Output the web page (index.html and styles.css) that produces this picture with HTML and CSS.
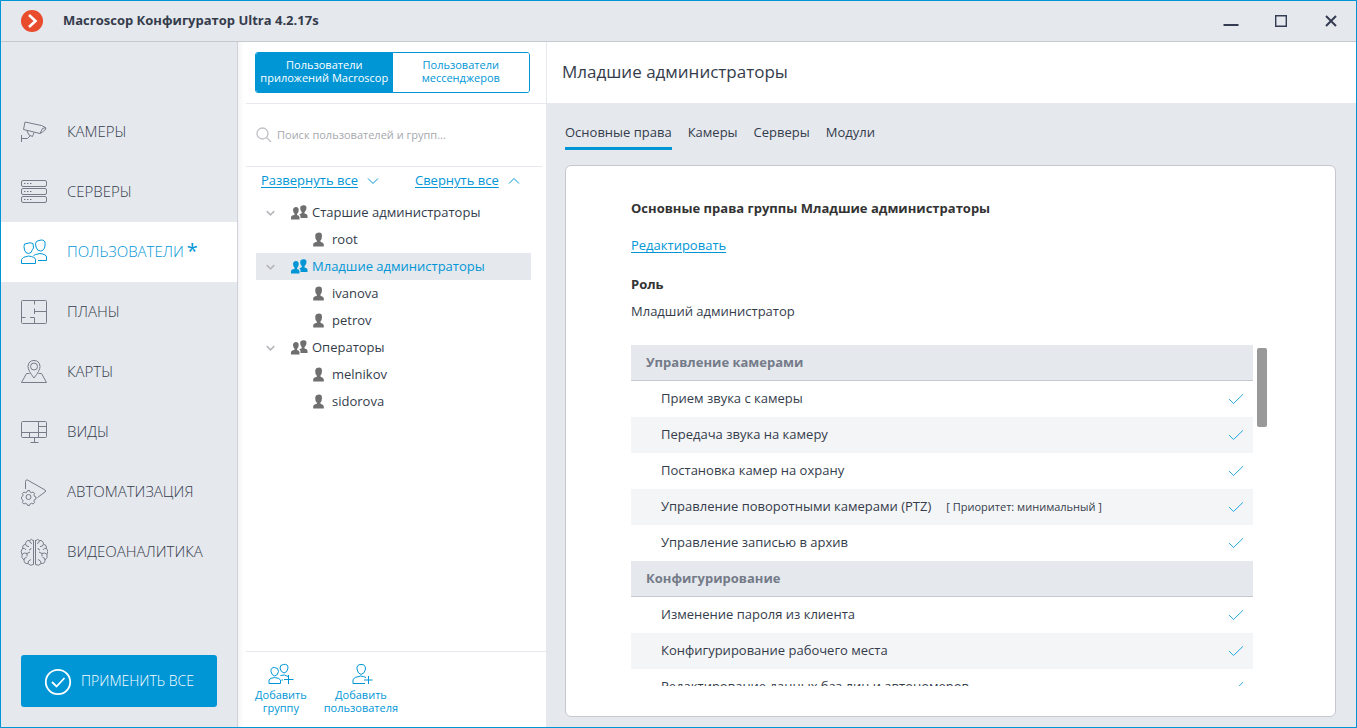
FILE: index.html
```html
<!DOCTYPE html>
<html lang="ru">
<head>
<meta charset="utf-8">
<title>Macroscop Конфигуратор</title>
<link rel="stylesheet" href="styles.css">
</head>
<body>
<svg class="sprite" aria-hidden="true">
  <symbol id="people" viewBox="0 0 17 15">
    <path d="M8.500 14.500V12.300Q8.500 10.500 6 10L6.300 8.800Q7.800 7.500 7.700 4.800 7.500 2 5 2T2 4.800Q2 7.500 3.500 8.800V10Q0 10.300 0 12.500V14.500Z"/>
    <path d="M9.500 13H16.500V10.800Q16.500 9 13.500 8.500V7.200Q15.500 5.500 15.500 3 15.500 0 12.500.3 9.200.3 9.200 3 9 5.500 10.800 7.200V8.300L8.300 9.300Q10 10.500 9.500 13Z"/>
  </symbol>
  <symbol id="person" viewBox="0 0 11 15">
    <path d="M5 .7Q9 0 9 4 9 7.500 7.200 9L8 10Q10.800 10.500 10.800 12.500V14.500H.2V12.500Q.2 10.500 3.500 10L4 9Q2 7 2.200 4 2.300 1 5 .7Z"/>
  </symbol>
  <symbol id="down" viewBox="0 0 12 8"><path d="M1 1.500 6 6.500 11 1.500"/></symbol>
  <symbol id="check" viewBox="0 0 16 12"><path d="M1 6 5.500 10.500 15 1.300"/></symbol>
</svg>
<div class="window">
  <header class="titlebar">
    <svg class="logo" viewBox="0 0 22 22"><circle cx="11" cy="11" r="11" fill="#e94b2d"/><path d="M8 5 14.500 11 8 17" fill="none" stroke="#fff" stroke-width="2.600"/></svg>
    <h1 class="app-name">Macroscop Конфигуратор Ultra 4.2.17s</h1>
    <button class="win-btn" aria-label="Свернуть"><svg viewBox="0 0 16 16"><path d="M.5 12h15" stroke-width="2"/></svg></button>
    <button class="win-btn" aria-label="Развернуть"><svg viewBox="0 0 16 16"><path d="M2.700 2.700h10.600v10.600H2.700Z" stroke-width="1.400"/></svg></button>
    <button class="win-btn" aria-label="Закрыть"><svg viewBox="0 0 16 16"><path d="M3 3 13 13M13 3 3 13" stroke-width="2"/></svg></button>
  </header>
  <div class="body">
    <aside class="sidebar">
      <nav class="nav">
        <a href="#" class="nav-item"><svg viewBox="0 0 28 28"><path d="M5 4 21.500 7.500Q26 9 26 11L22.500 14 20 15.500 3.500 11.500ZM20 15.500 22.500 10.500 26 9.500M7 13 9 17 12.500 18.500 14 14.500M10 18 7.500 20.500H1.500M1.500 17V24"/></svg>КАМЕРЫ</a>
        <a href="#" class="nav-item"><svg viewBox="0 0 28 28"><rect x="1.500" y="2.500" width="25" height="6" rx="1.500"/><rect x="1.500" y="10.500" width="25" height="6" rx="1.500"/><rect x="1.500" y="18.500" width="25" height="6" rx="1.500"/><path d="M4 5.500h1.500m1.500 0h1.500m1.500 0h1.500M4 13.500h1.500m1.500 0h1.500m1.500 0h1.500M4 21.500h1.500m1.500 0h1.500m1.500 0h1.500"/></svg>СЕРВЕРЫ</a>
        <a href="#" class="nav-item active"><svg viewBox="0 0 28 28"><path d="M4 8.500Q3.500 5 7 5.500 10 4 13 5.500L13.500 10 12.500 11.500Q11.500 15.500 8.500 15.500 5.500 15.500 4.500 12ZM1.500 25.500V21.500Q2 19 8.500 18 15.500 19 15.500 21.500V25.500ZM15.500 5.500Q15.500 3 19 2.500 23.500 1 25 4V8Q24 13 20.500 13 17 13 16 9ZM13.500 17.500Q14.500 16.500 20 15.500 26.500 16.500 26.500 19V22.500H18"/></svg>ПОЛЬЗОВАТЕЛИ<span class="dirty">*</span></a>
        <a href="#" class="nav-item"><svg viewBox="0 0 28 28"><rect x="1.500" y="2.500" width="25" height="23" rx="1"/><path d="M14.500 2.500v4M14.500 10.500v5.500M14.500 13.500h12M1.500 19.500h4M10 19.500h4.500v6"/></svg>ПЛАНЫ</a>
        <a href="#" class="nav-item"><svg viewBox="0 0 28 28"><path d="M14 20Q8 12.500 8 8.500 8.500 2.500 14 2.500T20 8.500Q20 12.500 14 20Z"/><circle cx="14" cy="8.500" r="3.500"/><path d="M9.500 15.500H6.500L1.500 24.500H26.500L21.500 15.500H18.500"/></svg>КАРТЫ</a>
        <a href="#" class="nav-item"><svg viewBox="0 0 28 28"><rect x="1.500" y="3.500" width="25" height="16" rx="1"/><path d="M18.500 3.500v16M1.500 14.500h25M18.500 8.500h8M9.500 14.500v5M14.500 19.500v5M10.500 24.500h8"/></svg>ВИДЫ</a>
        <a href="#" class="nav-item"><svg viewBox="0 0 28 28"><path d="M5.500 11V3.500Q5.500 1.500 7.500 2L25 12Q26.500 13 25 14L17.500 19.500"/><circle cx="8.500" cy="19" r="2.500"/><path d="m7.500 12.500 2 0 .6 1.600 1.500.6 1.500-.7 1.500 1.500-.7 1.500.6 1.400 1.500.6v2l-1.500.6-.6 1.400.7 1.500-1.500 1.500-1.500-.7-1.500.6-.6 1.500h-2l-.6-1.500-1.500-.6-1.500.7-1.500-1.500.7-1.500-.6-1.400-1-.6v-2l1-.6.6-1.400-.7-1.500 1.500-1.500 1.500.7 1.500-.6Z"/></svg>АВТОМАТИЗАЦИЯ</a>
        <a href="#" class="nav-item"><svg viewBox="0 0 28 28"><path id="half" d="M13.500 2v24.500Q10 28.500 8 25.500 4 26 4 22 1 20 2 16.500 0 13 2.500 10.500 2 7 5.500 6 6 2 9.500 2.500 11.500 0 13.500 3M9.500 2.500Q9.500 5 12 5.500M5.500 6Q6 9 9 8.500M2.500 10.500Q5 9.500 6 12M2 16.500Q4 14 7 15.500L10 14M7 15.500V18.500M4 22Q4 19.500 6.500 19.500M8 25.500Q7.500 22.500 11 21.500M9 12q2 0 2-2"/><use href="#half" transform="matrix(-1 0 0 1 29 0)"/></svg>ВИДЕОАНАЛИТИКА</a>
      </nav>
      <button class="apply"><svg viewBox="0 0 28 28"><circle cx="14" cy="14" r="12.200"/><path d="M8 14 12.500 18.500 20.500 10"/></svg>ПРИМЕНИТЬ ВСЕ</button>
    </aside>
    <section class="users">
      <div class="switch-box">
        <div class="switch">
          <button class="switch-btn on">Пользователи приложений Macroscop</button>
          <button class="switch-btn">Пользователи мессенджеров</button>
        </div>
      </div>
      <label class="search">
        <svg viewBox="0 0 16 16"><circle cx="6.500" cy="6.500" r="5.500"/><path d="M10.500 10.500 15 15"/></svg>
        <input type="search" placeholder="Поиск пользователей и групп..." aria-label="Поиск пользователей и групп">
      </label>
      <div class="tree-tools">
        <a href="#">Развернуть все</a><svg viewBox="0 0 12 8"><use href="#down"/></svg>
        <a href="#" class="collapse">Свернуть все</a><svg class="up" viewBox="0 0 12 8"><use href="#down"/></svg>
      </div>
      <ul class="tree">
        <li class="group"><svg class="chev"><use href="#down"/></svg><svg class="people"><use href="#people"/></svg>Старшие администраторы</li>
        <li class="user"><svg class="person"><use href="#person"/></svg>root</li>
        <li class="group selected"><svg class="chev"><use href="#down"/></svg><svg class="people"><use href="#people"/></svg>Младшие администраторы</li>
        <li class="user"><svg class="person"><use href="#person"/></svg>ivanova</li>
        <li class="user"><svg class="person"><use href="#person"/></svg>petrov</li>
        <li class="group"><svg class="chev"><use href="#down"/></svg><svg class="people"><use href="#people"/></svg>Операторы</li>
        <li class="user"><svg class="person"><use href="#person"/></svg>melnikov</li>
        <li class="user"><svg class="person"><use href="#person"/></svg>sidorova</li>
      </ul>
      <div class="actions">
        <button class="action"><svg viewBox="0 0 26 22"><path d="M3 8.500Q2.500 4.500 6.500 4.500 10.500 4.500 10.500 8.500 10 12.500 6.500 13 3.500 12 3 8.500ZM1 20.500V17Q2 15 6.500 14.500 11.500 15 12.500 17V20.500ZM12 5Q12 1.500 15.500 1.500 20 .5 20 5 19.500 9.500 16 10 12.500 9 12 5ZM12.500 12.500Q17 11 20 13.500M20.500 12v9M16 16.500h9.500M13.500 17h1.500"/></svg>Добавить<br>группу</button>
        <button class="action"><svg viewBox="0 0 26 22"><path d="M9 6Q8.500 1.500 13 1.500 17.500 1 17.500 6 17 10.500 13 11.500 9.500 10.500 9 6ZM17 20.500H5V16.500Q6 14 12.500 13 16 13.500 18 14.500M20.500 13v8M16 17h8.500"/></svg>Добавить<br>пользователя</button>
      </div>
    </section>
    <main class="details">
      <h2 class="page-title">Младшие администраторы</h2>
      <div class="workspace">
        <nav class="tabs">
          <a href="#" class="tab current">Основные права</a>
          <a href="#" class="tab">Камеры</a>
          <a href="#" class="tab">Серверы</a>
          <a href="#" class="tab">Модули</a>
        </nav>
        <div class="card">
          <h3>Основные права группы Младшие администраторы</h3>
          <a href="#" class="edit">Редактировать</a>
          <h3>Роль</h3>
          <p class="role">Младший администратор</p>
          <div class="rights">
            <div class="rights-view">
              <table>
                <tbody>
                  <tr><th colspan="2">Управление камерами</th></tr>
                  <tr><td>Прием звука с камеры</td><td><svg class="tick"><use href="#check"/></svg></td></tr>
                  <tr class="alt"><td>Передача звука на камеру</td><td><svg class="tick"><use href="#check"/></svg></td></tr>
                  <tr><td>Постановка камер на охрану</td><td><svg class="tick"><use href="#check"/></svg></td></tr>
                  <tr class="alt"><td>Управление поворотными камерами (PTZ)<small>[ Приоритет: минимальный ]</small></td><td><svg class="tick"><use href="#check"/></svg></td></tr>
                  <tr><td>Управление записью в архив</td><td><svg class="tick"><use href="#check"/></svg></td></tr>
                  <tr><th colspan="2">Конфигурирование</th></tr>
                  <tr><td>Изменение пароля из клиента</td><td><svg class="tick"><use href="#check"/></svg></td></tr>
                  <tr class="alt"><td>Конфигурирование рабочего места</td><td><svg class="tick"><use href="#check"/></svg></td></tr>
                  <tr><td>Редактирование данных баз лиц и автономеров</td><td><svg class="tick"><use href="#check"/></svg></td></tr>
                </tbody>
              </table>
            </div>
            <div class="scroll-thumb"></div>
          </div>
        </div>
      </div>
    </main>
  </div>
</div>
</body>
</html>
```

FILE: styles.css
```css
* { box-sizing: border-box; }
body {
  margin: 0;
  font: 13px/20px "Open Sans", "Noto Sans", sans-serif;
  color: #343c4c;
}
h1, h2, h3, p, ul { margin: 0; padding: 0; }
a { color: #0096d6; }
button { font: inherit; cursor: pointer; }
svg { flex: none; fill: none; stroke: currentColor; }
.sprite { position: absolute; width: 0; height: 0; }
.sprite symbol { stroke: inherit; }

.window {
  height: 100vh;
  display: flex;
  flex-direction: column;
  border: 1px solid #0096d6;
  background: #e5e8ed;
}
.titlebar {
  height: 41px;
  flex: none;
  display: flex;
  align-items: center;
  padding: 0 8px 0 20px;
  border-bottom: 1px solid #c6c8d0;
}
.logo { width: 22px; height: 22px; stroke: none; }
.app-name { flex: 1; margin-left: 20px; padding-bottom: 2px; font-size: 13px; font-weight: 700; }
.win-btn {
  width: 34px;
  height: 34px;
  margin-left: 16px;
  padding: 9px;
  border: 0;
  background: none;
  color: #343c54;
}
.win-btn svg { display: block; width: 16px; height: 16px; }

.body { flex: 1; min-height: 0; display: flex; }

.sidebar {
  width: 237px;
  flex: none;
  display: flex;
  flex-direction: column;
  padding: 60px 0 20px;
  border-right: 1px solid #d0d2d9;
}
.nav { flex: 1; }
.nav-item {
  height: 60px;
  display: flex;
  align-items: center;
  padding: 0 0 2px 19px;
  font-size: 15px;
  font-weight: 350;
  color: #343c4c;
  text-decoration: none;
}
.nav-item svg { width: 28px; height: 28px; margin: 2px 19px 0 0; color: #777c88; }
.nav-item.active, .nav-item.active svg { color: #0096d6; }
.nav-item.active { background: #fff; }
.dirty { margin-left: 3px; font-size: 20px; font-weight: 400; }
.apply {
  height: 52px;
  display: flex;
  align-items: center;
  justify-content: center;
  gap: 9px;
  margin: 0 20px;
  padding-bottom: 2px;
  border: 0;
  border-radius: 3px;
  background: #0096d6;
  color: #fff;
  font-size: 14px;
  font-weight: 350;
}
.apply svg { width: 28px; height: 28px; margin-top: 2px; stroke-width: 1.8; }

.users {
  width: 309px;
  flex: none;
  display: flex;
  flex-direction: column;
  padding-left: 8px;
  border-right: 1px solid #e5e8ed;
  background: linear-gradient(90deg, #f5f5f7, #fff 6px);
}
.switch-box { padding: 10px 16px 10px 9px; border-bottom: 1px solid #e5e8ed; }
.switch {
  display: flex;
  height: 41px;
  border: 1px solid #0096d6;
  border-radius: 3px;
  overflow: hidden;
}
.switch-btn {
  flex: 1;
  padding: 0 4px 3px;
  border: 0;
  background: #fff;
  color: #0096d6;
  font-size: 11px;
  line-height: 13px;
}
.switch-btn.on { background: #0096d6; color: #fff; }
.search {
  height: 63px;
  flex: none;
  display: flex;
  align-items: center;
  gap: 5px;
  margin-right: 4px;
  padding-left: 10px;
  border-bottom: 1px solid #e5e8ed;
}
.search svg { width: 16px; height: 16px; color: #bfbfc6; stroke-width: 1.3; }
.search input {
  flex: 1;
  min-width: 0;
  padding: 0;
  border: 0;
  outline: 0;
  background: none;
  font: 11px/20px "Open Sans", "Noto Sans", sans-serif;
}
.search input::placeholder { color: #a6a8ae; }
.tree-tools { display: flex; align-items: center; padding: 3px 0 9px 15px; }
.tree-tools a { text-underline-offset: 2px; }
.tree-tools svg { width: 12px; height: 8px; margin: 2px 0 0 9px; color: #0096d6; }
.tree-tools .collapse { margin-left: 36px; }
.up { transform: rotate(180deg); }
.tree { flex: 1; margin: 0 15px 0 10px; list-style: none; }
.tree li { height: 27px; display: flex; align-items: center; padding-bottom: 2px; }
.group { padding-left: 10px; }
.user { padding-left: 57px; }
.chev { width: 9px; height: 6px; margin-top: 2px; color: #b4b6bb; stroke: #b4b6bb; stroke-width: 2; }
.selected { background: #e5e8ed; color: #0096d6; }
.people { width: 17px; height: 15px; margin: 2px 4px 0 16px; fill: #6f6f6f; stroke: none; }
.selected .people { fill: #0096d6; }
.person { width: 11px; height: 15px; margin: 2px 8px 0 0; fill: #6f6f6f; stroke: none; }
.actions {
  height: 76px;
  flex: none;
  display: flex;
  align-items: flex-start;
  gap: 17px;
  padding: 11px 0 0 9px;
  border-top: 1px solid #e5e8ed;
}
.action {
  padding: 0;
  border: 0;
  background: none;
  color: #0096d6;
  font-size: 11px;
  line-height: 13px;
}
.action svg { display: block; width: 26px; height: 22px; margin: 0 auto 3px; }

.details { flex: 1; min-width: 0; display: flex; flex-direction: column; }
.page-title {
  height: 61px;
  flex: none;
  padding-left: 15px;
  background: #fff;
  font-size: 17px;
  font-weight: 400;
  line-height: 59px;
}
.workspace {
  flex: 1;
  min-height: 0;
  display: flex;
  flex-direction: column;
  padding: 19px 20px 10px 18px;
}
.tabs { display: flex; gap: 16px; margin-bottom: 15px; }
.tab {
  height: 28px;
  color: #343c4c;
  text-decoration: none;
}
.tab.current { border-bottom: 3px solid #0096d6; }
.card {
  flex: 1;
  min-height: 0;
  display: flex;
  flex-direction: column;
  align-items: flex-start;
  padding: 32px 68px 30px 65px;
  border: 1px solid #c6c8d0;
  border-radius: 6px;
  background: #fff;
}
.card h3 { font-size: 13px; font-weight: 700; color: #333; }
.edit { margin: 17px 0 19px; text-underline-offset: 2px; }
.role { margin: 7px 0 24px; }
.rights {
  flex: 1;
  min-height: 0;
  align-self: stretch;
  display: flex;
  align-items: flex-start;
  gap: 4px;
}
.rights-view { flex: 1; height: 100%; overflow: hidden; }
.scroll-thumb { width: 10px; height: 79px; margin-top: 3px; border-radius: 2px; background: #999; }
table { width: 100%; border-collapse: separate; border-spacing: 0; }
th, td { height: 36px; padding: 0 0 2px; text-align: left; }
th { padding-left: 15px; border-bottom: 1px solid #c6c8d0; background: #e5e8ed; color: #747b88; }
td:first-child { padding-left: 30px; }
td:last-child { width: 25px; padding: 0; }
.tick { display: block; width: 16px; height: 12px; stroke: #29abe2; stroke-width: 1; }
.alt { background: #f4f5f7; }
small { margin-left: 15px; font-size: 11px; }
```
